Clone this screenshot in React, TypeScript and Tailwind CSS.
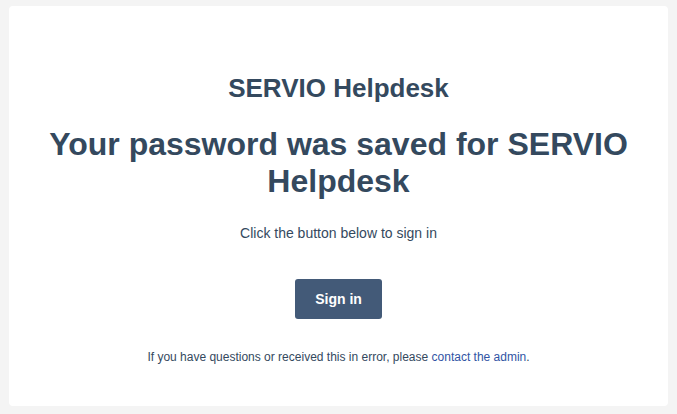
export default function App() {
  return (
    <div
      className="min-h-screen bg-[#f4f4f4] px-[9px] pt-[6px] pb-[8px]"
      style={{ fontFamily: '"Liberation Sans", Arial, sans-serif' }}
    >
      <div className="flex h-[400px] flex-col items-center rounded-[4px] bg-white pt-[67px] text-center text-[#34495e]">
        <h1 className="text-[26px] font-bold leading-[30px]">SERVIO Helpdesk</h1>
        <h2 className="mt-[23px] w-[600px] text-[32px] font-bold leading-[37px]">
          Your password was saved for SERVIO Helpdesk
        </h2>
        <p className="mt-[25px] text-[14px] leading-[17px]">Click the button below to sign in</p>
        <button className="mt-[37px] h-[40px] w-[87px] rounded-[3px] bg-[#435a78] text-[14px] font-bold text-white">
          Sign in
        </button>
        <p className="mt-[31px] text-[12px] leading-[14px]">
          If you have questions or received this in error, please{" "}
          <a href="#" className="text-[#3154a4]">
            contact the admin
          </a>
          .
        </p>
      </div>
    </div>
  );
}
